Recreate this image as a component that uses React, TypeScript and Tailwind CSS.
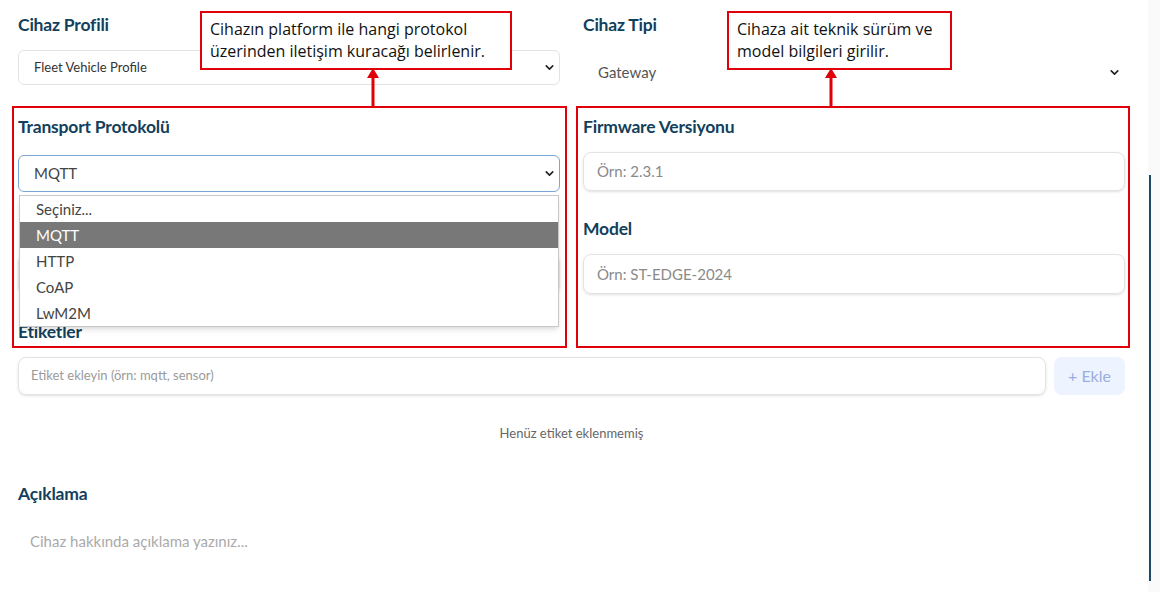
import { ChevronDown } from 'lucide-react';

const label = "text-[17.5px] leading-6 font-bold text-[#123f5c] tracking-[-0.2px]";

function SelectBox({ value, className }: { value: string; className: string }) {
    return (
        <div className={`flex items-center justify-between bg-white rounded-md ${className}`}>
            <span>{value}</span>
            <ChevronDown size={13} strokeWidth={3} className="text-[#222]" />
        </div>
    );
}

function Note({ lines, className }: { lines: string[]; className: string }) {
    return (
        <div className={`absolute bg-white border-2 border-[#e0000a] px-[8px] pt-[5px] font-['Open_Sans',sans-serif] text-[16px] leading-[22px] text-[#111] ${className}`}>
            {lines.map((l) => (
                <div key={l} className="whitespace-nowrap">{l}</div>
            ))}
        </div>
    );
}

function Arrow({ className }: { className: string }) {
    return (
        <svg className={`absolute ${className}`} width="14" height="40" viewBox="0 0 14 40">
            <polygon points="7,0 13,10 1,10" fill="#e0000a" />
            <rect x="5.5" y="9" width="3" height="31" fill="#e0000a" />
        </svg>
    );
}

export default function App() {
    return (
        <div className="relative w-[1164px] h-[592px] overflow-hidden bg-white font-['Lato',sans-serif]">
            {/* form */}
            <div className="pl-[18px] pr-[39px] pt-[13px]">
                <div className="grid grid-cols-2 gap-x-[23px]">
                    {/* left column */}
                    <div className="flex flex-col">
                        <p className={label}>Cihaz Profili</p>
                        <SelectBox
                            value="Fleet Vehicle Profile"
                            className="mt-[13px] h-[35px] border border-[#e3e3e3] pl-[15px] pr-[3px] text-[13px] text-[#333]"
                        />
                        <p className={`${label} mt-[30px]`}>Transport Protokolü</p>
                        <SelectBox
                            value="MQTT"
                            className="mt-[16px] h-[37px] border border-[#7aa7d6] pl-[15px] pr-[3px] text-[15px] text-[#444]"
                        />
                        {/* field hidden under the open list */}
                        <div className="mt-[62px] h-[40px] rounded-lg border border-[#e3e3e3] shadow-sm" />
                    </div>

                    {/* right column */}
                    <div className="flex flex-col">
                        <p className={label}>Cihaz Tipi</p>
                        <SelectBox
                            value="Gateway"
                            className="mt-[16px] h-[38px] pl-[15px] pr-[4px] text-[15px] text-[#555]"
                        />
                        <p className={`${label} mt-[24px]`}>Firmware Versiyonu</p>
                        <div className="mt-[13px] h-[39px] rounded-lg border border-[#e3e3e3] shadow-sm flex items-center pl-[13px] text-[15px] text-[#8a8a8a]">
                            Örn: 2.3.1
                        </div>
                        <p className={`${label} mt-[26px]`}>Model</p>
                        <div className="mt-[13px] h-[40px] rounded-lg border border-[#e3e3e3] shadow-sm flex items-center pl-[13px] text-[15px] text-[#8a8a8a]">
                            Örn: ST-EDGE-2024
                        </div>
                    </div>
                </div>

                {/* tags */}
                <p className={`${label} mt-[26px]`}>Etiketler</p>
                <div className="mt-[13px] flex gap-[8px]">
                    <div className="flex-1 h-[38px] rounded-lg border border-[#e3e3e3] shadow-sm flex items-center pl-[12px] text-[13px] text-[#9a9a9a]">
                        Etiket ekleyin (örn: mqtt, sensor)
                    </div>
                    <div className="w-[71px] h-[38px] rounded-lg bg-[#edf3ff] flex items-center justify-center text-[16px] text-[#9aaedf]">
                        + Ekle
                    </div>
                </div>
                <p className="mt-[28px] text-center text-[13px] leading-5 text-[#666]">Henüz etiket eklenmemiş</p>

                {/* description */}
                <p className={`${label} mt-[39px]`}>Açıklama</p>
                <p className="mt-[23px] pl-[12px] text-[15px] leading-6 text-[#aaaaaa]">Cihaz hakkında açıklama yazınız...</p>
            </div>

            {/* scroll track */}
            <div className="absolute right-[4px] top-0 w-[12px] h-[592px] bg-[#fafafa]">
                <div className="ml-[1px] mt-[175px] w-[2px] h-[406px] bg-[#1d4a68]" />
            </div>

            {/* open dropdown */}
            <div className="absolute left-[19px] top-[195px] w-[540px] border border-[#c8c8c8] bg-white shadow-md text-[15px] text-[#444]">
                <div className="h-[26px] flex items-center pl-[16px]">Seçiniz...</div>
                <div className="h-[26px] flex items-center pl-[16px] bg-[#787878] text-white">MQTT</div>
                <div className="h-[26px] flex items-center pl-[16px]">HTTP</div>
                <div className="h-[26px] flex items-center pl-[16px]">CoAP</div>
                <div className="h-[26px] flex items-center pl-[16px]">LwM2M</div>
            </div>

            {/* annotations */}
            <div className="absolute left-[12px] top-[106px] w-[555px] h-[242px] border-2 border-[#e0000a]" />
            <div className="absolute left-[576px] top-[106px] w-[554px] h-[242px] border-2 border-[#e0000a]" />
            <Arrow className="left-[366px] top-[68px]" />
            <Arrow className="left-[824px] top-[68px]" />
            <Note className="left-[200px] top-[11px] w-[312px] h-[59px]" lines={['Cihazın platform ile hangi protokol', 'üzerinden iletişim kuracağı belirlenir.']} />
            <Note className="left-[727px] top-[11px] w-[225px] h-[59px]" lines={['Cihaza ait teknik sürüm ve', 'model bilgileri girilir.']} />
        </div>
    );
}
